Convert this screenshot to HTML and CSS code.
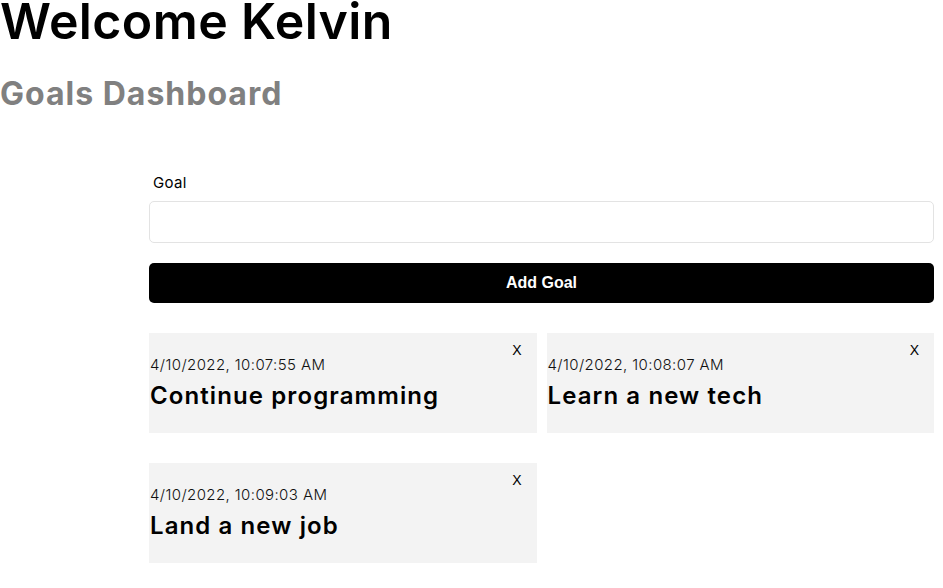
FILE: index.html
```html
<!DOCTYPE html>
<html lang="en">
<head>
<meta charset="utf-8">
<title>Goals Dashboard</title>
<link rel="stylesheet" href="styles.css">
</head>
<body>
<header class="page-header">
  <h1 class="welcome">Welcome Kelvin</h1>
  <h2 class="subtitle">Goals Dashboard</h2>
</header>
<main class="content">
  <form class="goal-form">
    <label class="goal-label" for="goal">Goal</label>
    <input class="goal-input" id="goal" type="text">
    <button class="add-btn" type="button">Add Goal</button>
  </form>
  <section class="goals">
    <div class="goal-card">
      <button class="close" type="button">X</button>
      <div class="goal-date">4/10/2022, 10:07:55 AM</div>
      <h2 class="goal-title">Continue programming</h2>
    </div>
    <div class="goal-card">
      <button class="close" type="button">X</button>
      <div class="goal-date">4/10/2022, 10:08:07 AM</div>
      <h2 class="goal-title">Learn a new tech</h2>
    </div>
    <div class="goal-card">
      <button class="close" type="button">X</button>
      <div class="goal-date">4/10/2022, 10:09:03 AM</div>
      <h2 class="goal-title">Land a new job</h2>
    </div>
  </section>
</main>
</body>
</html>
```
FILE: styles.css
```css
* { box-sizing: border-box; }
body {
  margin: 0;
  font-family: Inter, "Noto Sans", sans-serif;
  color: #000;
  background: #fff;
}
.page-header { padding-left: 0; }
.welcome {
  margin: 0;
  font-size: 50px;
  line-height: 42px;
  font-weight: 600;
  letter-spacing: 0.4px;
}
.subtitle {
  margin: 32px 0 0;
  font-size: 32px;
  line-height: 40px;
  font-weight: 700;
  color: #808080;
  letter-spacing: 1px;
}
.content {
  margin-left: 149px;
  width: 785px;
  padding-top: 59px;
}
.goal-form { display: flex; flex-direction: column; }
.goal-label {
  font-size: 15px;
  line-height: 20px;
  padding-left: 4px;
  margin-bottom: 8px;
  letter-spacing: 0.3px;
}
.goal-input {
  height: 42px;
  border: 1px solid #e3e3e3;
  border-radius: 5px;
  font: inherit;
  padding: 0 10px;
}
.add-btn {
  margin-top: 20px;
  height: 40px;
  border: none;
  border-radius: 5px;
  background: #000;
  color: #fff;
  font-family: "Liberation Sans", Arial, sans-serif;
  font-weight: 700;
  font-size: 16px;
}
.goals {
  margin-top: 30px;
  display: grid;
  grid-template-columns: 1fr 1fr;
  column-gap: 10px;
  row-gap: 30px;
}
.goal-card {
  position: relative;
  height: 100px;
  background: #f3f3f3;
  padding: 22px 16px 0 1px;
}
.close {
  position: absolute;
  top: 7px;
  right: 15px;
  border: none;
  background: transparent;
  padding: 0;
  font-family: "Liberation Sans", Arial, sans-serif;
  font-size: 14px;
  line-height: 20px;
  color: #000;
}
.goal-date {
  font-size: 15px;
  line-height: 20px;
  font-weight: 300;
  color: #111;
  letter-spacing: 0.4px;
}
.goal-title {
  margin: 5px 0 0;
  font-size: 24px;
  line-height: 32px;
  font-weight: 600;
  letter-spacing: 1.1px;
}
```
